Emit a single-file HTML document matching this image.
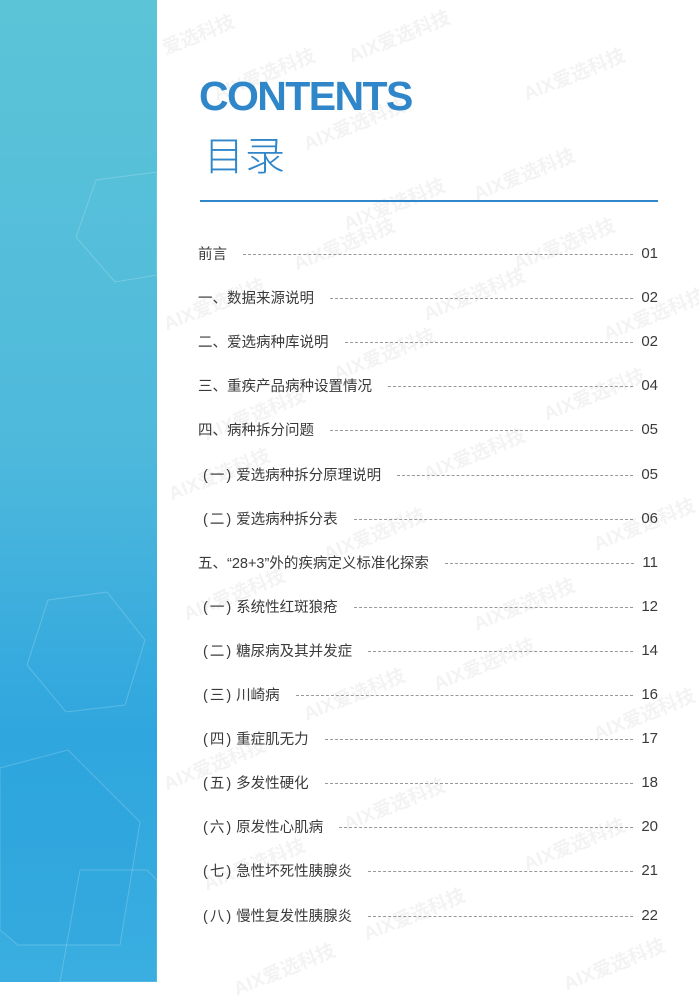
<!DOCTYPE html>
<html><head><meta charset="utf-8"><style>
html,body{margin:0;padding:0}
body{width:699px;height:982px;position:relative;overflow:hidden;background:#fff;font-family:"Liberation Sans","Noto Sans CJK SC",sans-serif}
.side{position:absolute;left:0;top:0;width:157px;height:982px;overflow:hidden;background:linear-gradient(180deg,#5cc4d7 0%,#4fb9dc 45%,#2fa6de 75%,#3aaee0 100%)}
.wm{position:absolute;color:#f3f3f3;font-size:19px;font-weight:bold;transform:rotate(-22deg);white-space:nowrap}
h1{position:absolute;left:199px;top:73px;margin:0;font-size:41px;font-weight:bold;color:#2f86c8;letter-spacing:-1.6px}
.mulu{position:absolute;left:204px;top:124px;font-size:40px;color:#2f86c8;font-weight:300;letter-spacing:1px}
.rule{position:absolute;left:200px;top:200px;width:458px;height:2px;background:#2f86c8}
.row{position:absolute;left:198px;width:460px;display:flex;align-items:center;font-size:14.5px;color:#3a3a3a;height:20px}
.row .d{flex:1;border-bottom:1px dashed #999;margin:0 8px 0 16px;height:0;position:relative;top:1px}
.row .n{font-size:15px}
.sub{left:203px;width:455px}
.p{letter-spacing:2px;margin-right:3px}
</style></head><body>
<div class="side">
<svg width="157" height="982" style="position:absolute;left:0;top:0" fill="none" stroke="rgba(255,255,255,0.2)" stroke-width="1">
<polygon points="96,180 157,172 157,275 115,282 76,237"/>
<polygon points="48,600 107,592 145,640 125,705 66,712 27,665"/>
<polygon points="0,768 68,750 140,822 120,945 18,945 0,930" fill="rgba(40,160,220,0.25)"/>
<polygon points="80,870 147,870 157,880 157,982 60,982"/>
</svg>
</div>
<div class="wm" style="left:160px;top:20px">爱选科技</div>
<div class="wm" style="left:345px;top:22px">AIX爱选科技</div>
<div class="wm" style="left:520px;top:60px">AIX爱选科技</div>
<div class="wm" style="left:210px;top:60px">AIX爱选科技</div>
<div class="wm" style="left:300px;top:110px">AIX爱选科技</div>
<div class="wm" style="left:470px;top:160px">AIX爱选科技</div>
<div class="wm" style="left:340px;top:190px">AIX爱选科技</div>
<div class="wm" style="left:290px;top:230px">AIX爱选科技</div>
<div class="wm" style="left:510px;top:230px">AIX爱选科技</div>
<div class="wm" style="left:160px;top:290px">AIX爱选科技</div>
<div class="wm" style="left:420px;top:280px">AIX爱选科技</div>
<div class="wm" style="left:600px;top:300px">AIX爱选科技</div>
<div class="wm" style="left:330px;top:340px">AIX爱选科技</div>
<div class="wm" style="left:200px;top:400px">AIX爱选科技</div>
<div class="wm" style="left:540px;top:380px">AIX爱选科技</div>
<div class="wm" style="left:420px;top:440px">AIX爱选科技</div>
<div class="wm" style="left:165px;top:460px">AIX爱选科技</div>
<div class="wm" style="left:320px;top:520px">AIX爱选科技</div>
<div class="wm" style="left:590px;top:510px">AIX爱选科技</div>
<div class="wm" style="left:180px;top:580px">AIX爱选科技</div>
<div class="wm" style="left:470px;top:590px">AIX爱选科技</div>
<div class="wm" style="left:300px;top:680px">AIX爱选科技</div>
<div class="wm" style="left:430px;top:650px">AIX爱选科技</div>
<div class="wm" style="left:590px;top:700px">AIX爱选科技</div>
<div class="wm" style="left:160px;top:750px">AIX爱选科技</div>
<div class="wm" style="left:340px;top:790px">AIX爱选科技</div>
<div class="wm" style="left:520px;top:830px">AIX爱选科技</div>
<div class="wm" style="left:200px;top:850px">AIX爱选科技</div>
<div class="wm" style="left:360px;top:900px">AIX爱选科技</div>
<div class="wm" style="left:230px;top:955px">AIX爱选科技</div>
<div class="wm" style="left:560px;top:950px">AIX爱选科技</div>
<h1>CONTENTS</h1>
<div class="mulu">目录</div>
<div class="rule"></div>
<div class="row" style="top:243px"><span>前言</span><span class="d"></span><span class="n">01</span></div>
<div class="row" style="top:287px"><span>一、数据来源说明</span><span class="d"></span><span class="n">02</span></div>
<div class="row" style="top:331px"><span>二、爱选病种库说明</span><span class="d"></span><span class="n">02</span></div>
<div class="row" style="top:375px"><span>三、重疾产品病种设置情况</span><span class="d"></span><span class="n">04</span></div>
<div class="row" style="top:419px"><span>四、病种拆分问题</span><span class="d"></span><span class="n">05</span></div>
<div class="row sub" style="top:464px"><span><span class="p">(一)</span>爱选病种拆分原理说明</span><span class="d"></span><span class="n">05</span></div>
<div class="row sub" style="top:508px"><span><span class="p">(二)</span>爱选病种拆分表</span><span class="d"></span><span class="n">06</span></div>
<div class="row" style="top:552px"><span>五、“28+3”外的疾病定义标准化探索</span><span class="d"></span><span class="n">11</span></div>
<div class="row sub" style="top:596px"><span><span class="p">(一)</span>系统性红斑狼疮</span><span class="d"></span><span class="n">12</span></div>
<div class="row sub" style="top:640px"><span><span class="p">(二)</span>糖尿病及其并发症</span><span class="d"></span><span class="n">14</span></div>
<div class="row sub" style="top:684px"><span><span class="p">(三)</span>川崎病</span><span class="d"></span><span class="n">16</span></div>
<div class="row sub" style="top:728px"><span><span class="p">(四)</span>重症肌无力</span><span class="d"></span><span class="n">17</span></div>
<div class="row sub" style="top:772px"><span><span class="p">(五)</span>多发性硬化</span><span class="d"></span><span class="n">18</span></div>
<div class="row sub" style="top:816px"><span><span class="p">(六)</span>原发性心肌病</span><span class="d"></span><span class="n">20</span></div>
<div class="row sub" style="top:860px"><span><span class="p">(七)</span>急性坏死性胰腺炎</span><span class="d"></span><span class="n">21</span></div>
<div class="row sub" style="top:905px"><span><span class="p">(八)</span>慢性复发性胰腺炎</span><span class="d"></span><span class="n">22</span></div>
</body></html>
